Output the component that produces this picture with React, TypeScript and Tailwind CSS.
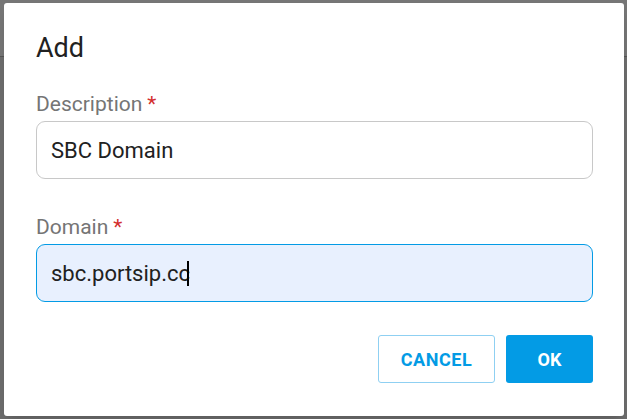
import React from 'react';

function Field({ label, value, focused }: { label: string; value: string; focused?: boolean }) {
  return (
    <div>
      <div className="text-[21px] leading-[26px] text-[#757575]">
        {label}
        <span className="ml-[5px] text-[#d32f2f]">*</span>
      </div>
      <div
        className={
          focused
            ? 'mt-[4px] flex h-[58px] items-center rounded-[9px] border border-[#039be5] bg-[#e8f0fe] px-[14px] text-[22px] text-[#212121]'
            : 'mt-[4px] flex h-[58px] items-center rounded-[9px] border border-[#c8c8c8] bg-white px-[14px] text-[22px] text-[#212121]'
        }
      >
        <span>{value}</span>
        {focused && <span className="ml-[-3px] h-[25px] w-[2px] bg-black" />}
      </div>
    </div>
  );
}

export default function App() {
  return (
    <div className="relative h-[419px] w-[627px] overflow-hidden bg-[#6d6d6d] font-['Roboto',sans-serif]">
      {/* page behind the overlay */}
      <div className="h-[57px] border-b border-[#555] bg-[#767676]" />

      {/* dialog */}
      <div className="absolute left-[4px] top-[3px] flex h-[413px] w-[620px] flex-col rounded-[3px] bg-white pl-[32px] pr-[31px] shadow-lg">
        <div className="pt-[28px] text-[27px] leading-[34px] text-[#212121]">Add</div>
        <div className="mt-[26px] flex flex-col gap-[35px]">
          <Field label="Description" value="SBC Domain" />
          <Field label="Domain" value="sbc.portsip.cc" focused />
        </div>
        <div className="mt-[33px] flex justify-end gap-[11px]">
          <button className="h-[48px] w-[117px] rounded-[3px] border border-[#8fd0f2] text-[18px] font-bold tracking-[0.03em] text-[#039be5]">
            CANCEL
          </button>
          <button className="h-[48px] w-[87px] rounded-[3px] bg-[#039be5] text-[18px] font-bold text-white">
            OK
          </button>
        </div>
      </div>
    </div>
  );
}
